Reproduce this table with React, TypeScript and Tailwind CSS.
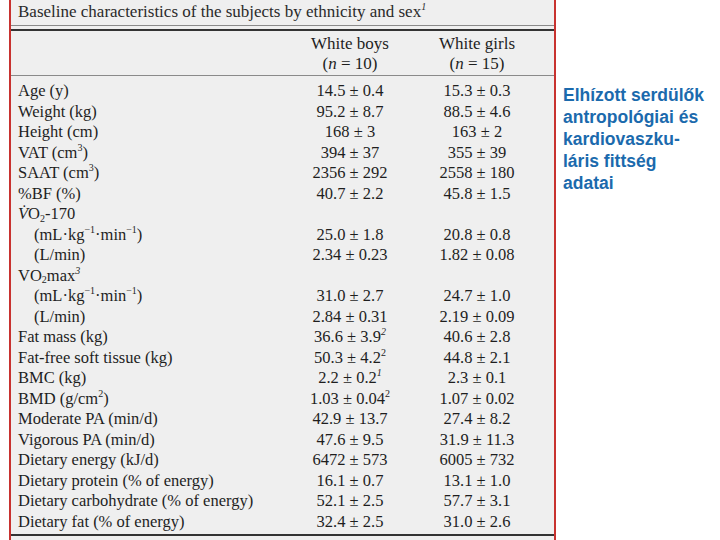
import React from "react";

type Row = { label: React.ReactNode; a?: React.ReactNode; b?: React.ReactNode; indent?: boolean };

const Sup = ({ children, i }: { children: React.ReactNode; i?: boolean }) => (
  <sup className={`text-[10px] leading-none top-[-7px] ${i ? "italic" : ""}`}>{children}</sup>
);
const Sub = ({ children }: { children: React.ReactNode }) => (
  <sub className="text-[10px] leading-none">{children}</sub>
);
const pm = (x: string, y: string, s?: React.ReactNode) => (
  <span>
    {x} ± {y}
    {s}
  </span>
);

const units = (
  <>
    (mL·kg<Sup>−1</Sup>·min<Sup>−1</Sup>)
  </>
);

const rows: Row[] = [
  { label: "Age (y)", a: pm("14.5", "0.4"), b: pm("15.3", "0.3") },
  { label: "Weight (kg)", a: pm("95.2", "8.7"), b: pm("88.5", "4.6") },
  { label: "Height (cm)", a: pm("168", "3"), b: pm("163", "2") },
  { label: <>VAT (cm<Sup>3</Sup>)</>, a: pm("394", "37"), b: pm("355", "39") },
  { label: <>SAAT (cm<Sup>3</Sup>)</>, a: pm("2356", "292"), b: pm("2558", "180") },
  { label: "%BF (%)", a: pm("40.7", "2.2"), b: pm("45.8", "1.5") },
  { label: <><span className="italic">V̇</span>O<Sub>2</Sub>-170</> },
  { label: units, indent: true, a: pm("25.0", "1.8"), b: pm("20.8", "0.8") },
  { label: "(L/min)", indent: true, a: pm("2.34", "0.23"), b: pm("1.82", "0.08") },
  { label: <>VO<Sub>2</Sub>max<Sup i>3</Sup></> },
  { label: units, indent: true, a: pm("31.0", "2.7"), b: pm("24.7", "1.0") },
  { label: "(L/min)", indent: true, a: pm("2.84", "0.31"), b: pm("2.19", "0.09") },
  { label: "Fat mass (kg)", a: pm("36.6", "3.9", <Sup i>2</Sup>), b: pm("40.6", "2.8") },
  { label: "Fat-free soft tissue (kg)", a: pm("50.3", "4.2", <Sup>2</Sup>), b: pm("44.8", "2.1") },
  { label: "BMC (kg)", a: pm("2.2", "0.2", <Sup i>1</Sup>), b: pm("2.3", "0.1") },
  { label: <>BMD (g/cm<Sup>2</Sup>)</>, a: pm("1.03", "0.04", <Sup>2</Sup>), b: pm("1.07", "0.02") },
  { label: "Moderate PA (min/d)", a: pm("42.9", "13.7"), b: pm("27.4", "8.2") },
  { label: "Vigorous PA (min/d)", a: pm("47.6", "9.5"), b: pm("31.9", "11.3") },
  { label: "Dietary energy (kJ/d)", a: pm("6472", "573"), b: pm("6005", "732") },
  { label: "Dietary protein (% of energy)", a: pm("16.1", "0.7"), b: pm("13.1", "1.0") },
  { label: "Dietary carbohydrate (% of energy)", a: pm("52.1", "2.5"), b: pm("57.7", "3.1") },
  { label: "Dietary fat (% of energy)", a: pm("32.4", "2.5"), b: pm("31.0", "2.6") },
];

export default function App() {
  return (
    <div className="w-[720px] h-[540px] bg-white flex overflow-hidden">
      <div className="ml-[9px] w-[547px] h-[540px] border-l-2 border-r-2 border-[#c8322f] bg-[#efefef] text-[#1e1e1e] font-['Liberation_Serif',serif] flex flex-col">
        <div className="h-[25px] pl-[7px] pt-[1px] text-[17px] leading-[22px] text-[#2a2a2a] whitespace-nowrap">
          Baseline characteristics of the subjects by ethnicity and sex<Sup i>1</Sup>
        </div>
        <div className="h-[1px] bg-[#8a8a8a]" />
        <div className="h-[3px]" />
        <div className="h-[2px] bg-[#333]" />
        <div className="h-[44px] pt-[3px] grid grid-cols-[276px_126px_128px] text-[17px] leading-[20px]">
          <div />
          <div className="text-center">
            <div>White boys</div>
            <div>
              (<span className="italic">n</span> = 10)
            </div>
          </div>
          <div className="text-center">
            <div>White girls</div>
            <div>
              (<span className="italic">n</span> = 15)
            </div>
          </div>
        </div>
        <div className="h-[1px] bg-[#8a8a8a]" />
        <div className="pt-[5px] text-[16.5px]">
          {rows.map((r, i) => (
            <div key={i} className="grid grid-cols-[276px_126px_128px] h-[20.5px] leading-[20.5px] whitespace-nowrap">
              <div className={r.indent ? "pl-[23px]" : "pl-[7px]"}>{r.label}</div>
              <div className="text-center">{r.a}</div>
              <div className="text-center">{r.b}</div>
            </div>
          ))}
        </div>
        <div className="mt-[2px] h-[2px] bg-[#333]" />
      </div>
      <div className="pl-[7px] pt-[84px] text-[17.5px] leading-[22px] font-bold text-[#1b6aad] font-['Liberation_Sans',Arial,sans-serif]">
        <div>Elhízott serdülők</div>
        <div>antropológiai és</div>
        <div>kardiovaszku-</div>
        <div>láris fittség</div>
        <div>adatai</div>
      </div>
    </div>
  );
}
